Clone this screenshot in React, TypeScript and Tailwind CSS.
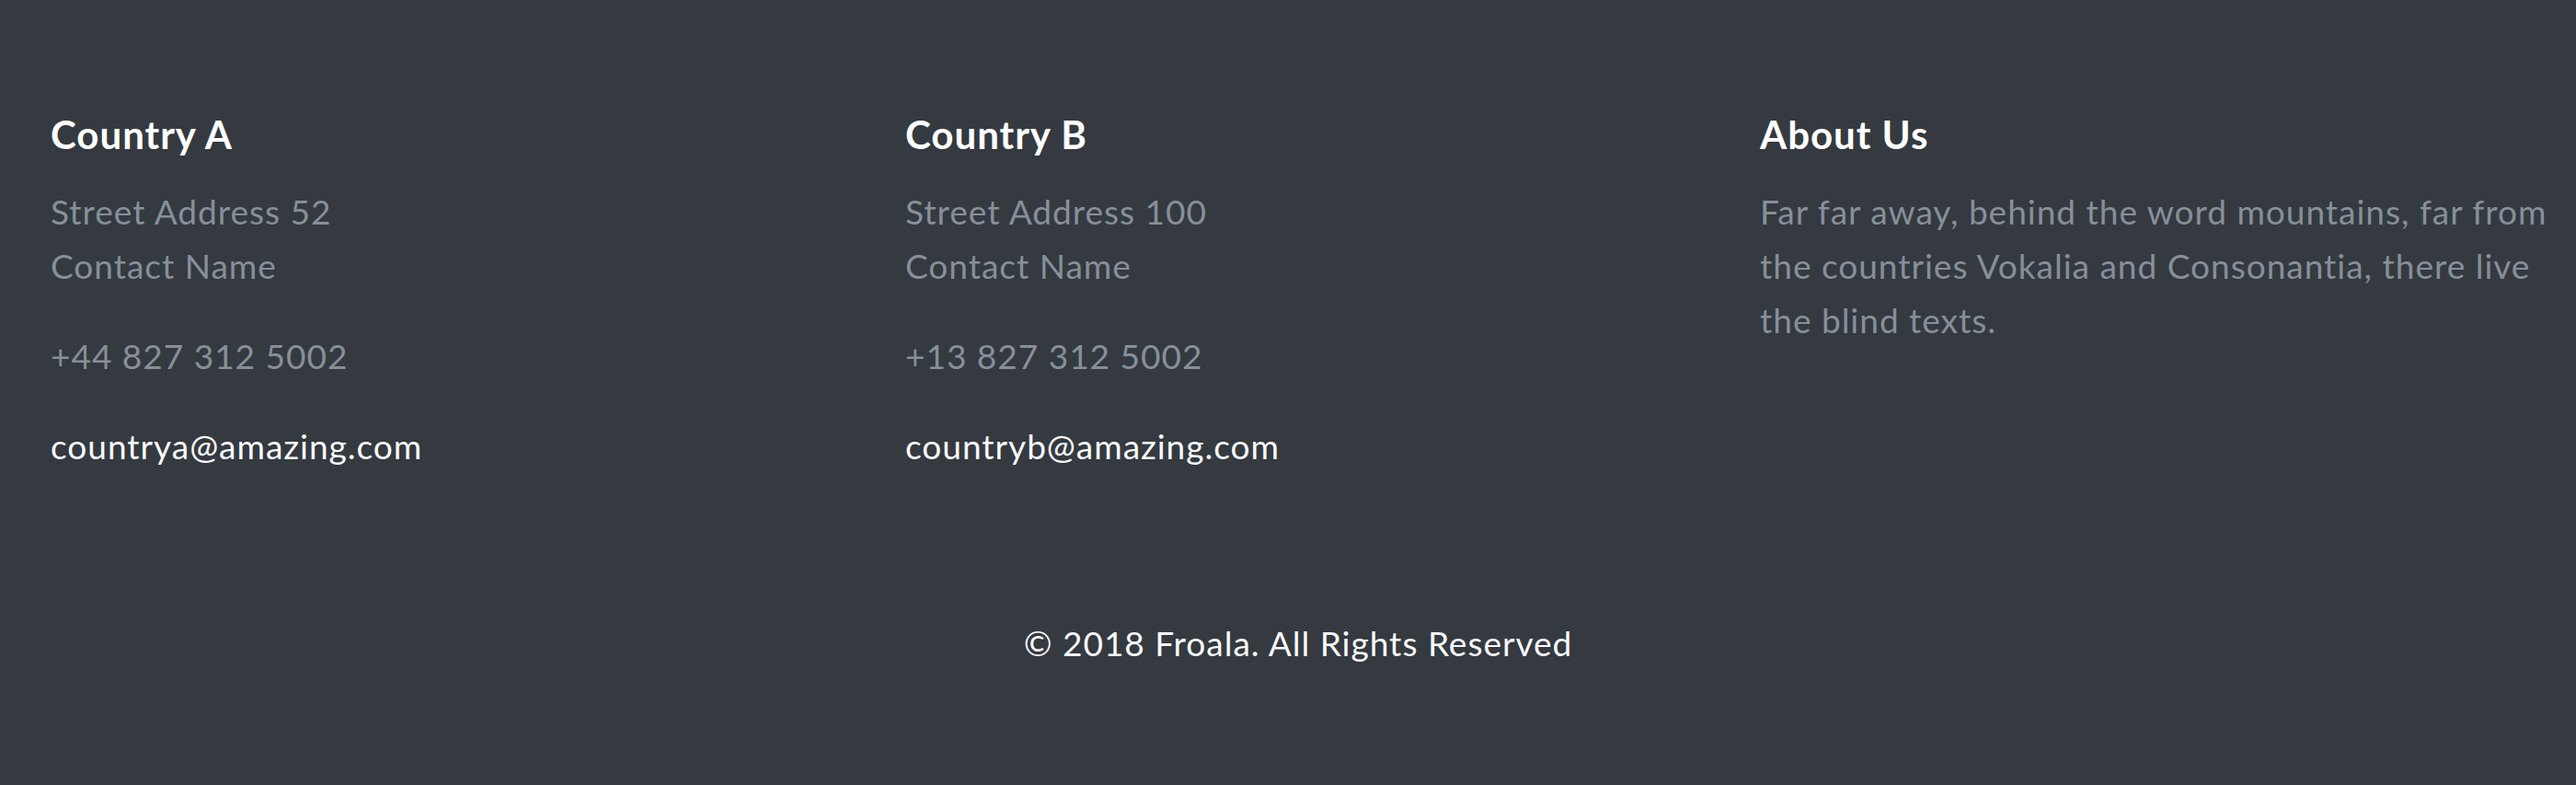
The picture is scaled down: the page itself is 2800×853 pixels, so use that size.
const offices = [
  {
    name: "Country A",
    street: "Street Address 52",
    contact: "Contact Name",
    phone: "+44 827 312 5002",
    email: "countrya@amazing.com",
  },
  {
    name: "Country B",
    street: "Street Address 100",
    contact: "Contact Name",
    phone: "+13 827 312 5002",
    email: "countryb@amazing.com",
  },
];

export default function App() {
  return (
    <footer
      className="min-h-[853px] bg-[#343a40] pt-[120px] pb-[40px] text-[37px] leading-[59px] tracking-[1px] text-[#878f99] [font-variant-ligatures:none]"
      style={{ fontFamily: "Lato, 'Noto Sans', sans-serif" }}
    >
      <div className="grid grid-cols-[repeat(3,869px)] gap-x-[60px] pl-[55px]">
        {offices.map((o) => (
          <div key={o.name}>
            <h3 className="mb-[27px] text-[42px] font-bold leading-[53px] tracking-[1px] text-white">
              {o.name}
            </h3>
            <p className="mb-[39px]">
              {o.street}
              <br />
              {o.contact}
            </p>
            <p className="mb-[39px]">{o.phone}</p>
            <p>
              <a href="#" className="text-[#f8f9fa]">
                {o.email}
              </a>
            </p>
          </div>
        ))}

        <div>
          <h3 className="mb-[27px] text-[42px] font-bold leading-[53px] tracking-[1px] text-white">
            About Us
          </h3>
          <p>
            Far far away, behind the word mountains, far from the countries Vokalia and
            Consonantia, there live the blind texts.
          </p>
        </div>
      </div>

      <div className="mt-[155px] pl-[22px] text-center text-[#f8f9fa]">
        <p>&copy; 2018 Froala. All Rights Reserved</p>
      </div>
    </footer>
  );
}
